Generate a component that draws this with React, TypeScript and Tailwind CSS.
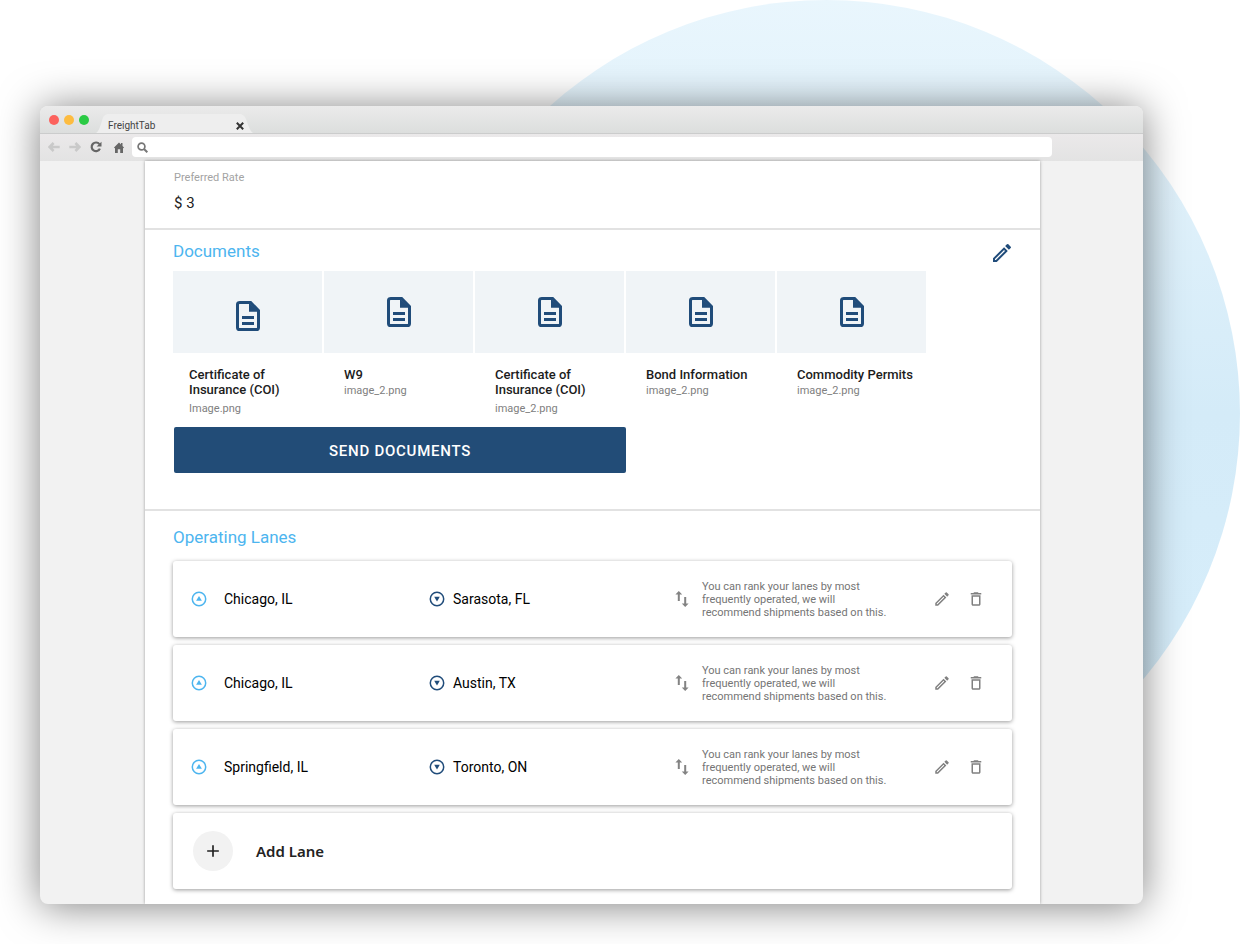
import React from "react";
import { MdDeleteOutline, MdOutlineModeEdit, MdAdd } from "react-icons/md";

const documents = [
  { title: "Certificate of Insurance (COI)", file: "Image.png", tile: "pt-2", label: "pl-4", gap: "mt-[3px]" },
  { title: "W9", file: "image_2.png", tile: "", label: "pl-5", gap: "" },
  { title: "Certificate of Insurance (COI)", file: "image_2.png", tile: "", label: "pl-5", gap: "mt-[3px]" },
  { title: "Bond Information", file: "image_2.png", tile: "", label: "pl-5", gap: "" },
  { title: "Commodity Permits", file: "image_2.png", tile: "", label: "pl-5", gap: "" },
];

const lanes = [
  { from: "Chicago, IL", to: "Sarasota, FL" },
  { from: "Chicago, IL", to: "Austin, TX" },
  { from: "Springfield, IL", to: "Toronto, ON" },
];

const cardShadow = "rounded-[3px] bg-white shadow-[0_1px_4px_rgba(0,0,0,0.4)]";

function DocumentIcon() {
  return (
    <svg viewBox="0 0 24 30" className="h-[30px] w-6" aria-hidden="true">
      <path
        d="M3.2 1.5H14.6L22.5 9.6V26.4Q22.5 28.5 20.4 28.5H3.6Q1.5 28.5 1.5 26.4V3.6Q1.5 1.5 3.6 1.5Z"
        fill="none"
        stroke="#204c7a"
        strokeWidth="3"
      />
      <path d="M13 1.5V10.8H22.5Z" fill="#204c7a" />
      <path d="M6 16.5H18M6 22.5H18" stroke="#204c7a" strokeWidth="3" />
    </svg>
  );
}

function PlaceIcon({ up }: { up: boolean }) {
  const color = up ? "#4db5ef" : "#204c7a";
  return (
    <svg viewBox="0 0 16 16" className="size-4 shrink-0" aria-hidden="true">
      <circle cx="8" cy="8" r="6.7" fill="none" stroke={color} strokeWidth="1.5" />
      <path d={up ? "M8 5L10.9 9.8H5.1Z" : "M8 10.5L5.2 5.8H10.8Z"} fill={color} />
    </svg>
  );
}

function SwapIcon() {
  return (
    <svg viewBox="0 0 14 18" className="h-[18px] w-3.5 shrink-0" fill="none" stroke="#838383" aria-hidden="true">
      <path d="M3.8 11V3M10.2 7V15" strokeWidth="2" />
      <path d="M3.8 1L7.2 4.6H0.4ZM10.2 17L6.800 13.4H13.6Z" fill="#838383" stroke="none" />
    </svg>
  );
}

function NavArrow({ flip }: { flip?: boolean }) {
  return (
    <svg viewBox="0 0 12 10" className={flip ? "h-2.5 w-3 rotate-180" : "h-2.5 w-3"} aria-hidden="true">
      <path d="M11.7 5H2M5.6 1L1.6 5L5.6 9" fill="none" stroke="#c9c9c9" strokeWidth="2.6" />
    </svg>
  );
}

function BrowserChrome() {
  return (
    <header>
      <div className="flex h-7 items-end border-b border-[#cbcccc] bg-linear-to-b from-[#ebebeb] to-[#dcdedd]">
        <div className="flex gap-[5px] self-center pl-[9px]">
          <span className="size-2.5 rounded-full bg-[#fc625d]" />
          <span className="size-2.5 rounded-full bg-[#fdbc40]" />
          <span className="size-2.5 rounded-full bg-[#2aca44]" />
        </div>
        <div className="relative ml-[7px] h-[19px] w-[157px]">
          <svg viewBox="0 0 160 19" preserveAspectRatio="none" className="absolute inset-0 size-full" aria-hidden="true">
            <path d="M0 19C3 17 4 13 6 7C7.5 2 9 0 13 0H146C150 0 152 2 153.5 7C156 13 157 17 160 19Z" fill="#eeeeee" />
          </svg>
          <div className="relative flex h-full items-center justify-between pt-1 pr-[9px] pl-3">
            <span className="text-[10px] leading-3 text-[#444]">FreightTab</span>
            <button type="button" aria-label="Close tab" className="size-2">
              <svg viewBox="0 0 8 8" className="size-2" aria-hidden="true">
                <path d="M0.8 0.8L7.2 7.2M7.2 0.8L0.8 7.2" stroke="#333" strokeWidth="2" />
              </svg>
            </button>
          </div>
        </div>
      </div>
      <div className="flex h-[27px] items-center bg-linear-to-b from-[#ebe9ea] to-[#e3e3e3] pr-[91px] pb-px pl-2">
        <button type="button" aria-label="Back"><NavArrow /></button>
        <button type="button" aria-label="Forward" className="ml-[9px]"><NavArrow flip /></button>
        <button type="button" aria-label="Reload" className="ml-[9px]">
          <svg viewBox="0 0 12 12" className="size-3" aria-hidden="true">
            <path d="M9.4 3.2A4.3 4.3 0 1 0 9.9 7.6" fill="none" stroke="#666" strokeWidth="2.2" />
            <path d="M11.5 0.8V5.5H6.6Z" fill="#666" />
          </svg>
        </button>
        <button type="button" aria-label="Home" className="ml-3">
          <svg viewBox="0 0 10 11" className="h-[11px] w-2.5" aria-hidden="true">
            <path d="M5 0.5L7 2.5V1H8.5V4L10 5.5L9.3 6.2L9 6V11H6.2V7.3H3.8V11H1V6L0.7 6.2L0 5.5Z" fill="#666" />
          </svg>
        </button>
        <label className="ml-2 flex h-5 grow items-center gap-1 rounded-[4px] bg-white pl-[5px]">
          <svg viewBox="0 0 11 11" className="size-[11px] shrink-0" aria-hidden="true">
            <circle cx="4.5" cy="4.5" r="3.4" fill="none" stroke="#777" strokeWidth="1.7" />
            <path d="M7 7L10.3 10.3" stroke="#777" strokeWidth="2" />
          </svg>
          <input type="text" aria-label="Address" className="h-4 w-full text-[11px] outline-none" />
        </label>
      </div>
    </header>
  );
}

function LaneCard({ from, to }: { from: string; to: string }) {
  return (
    <li className={`flex h-[76px] items-center pr-[27px] pl-[18px] text-sm leading-4 text-black ${cardShadow}`}>
      <div className="flex w-[238px] items-center gap-[17px]">
        <PlaceIcon up />
        <span>{from}</span>
      </div>
      <div className="flex grow items-center gap-2">
        <PlaceIcon up={false} />
        <span>{to}</span>
      </div>
      <div className="flex w-[258px] items-center gap-[13px]">
        <SwapIcon />
        <p className="w-[190px] text-[11px] leading-[13px] text-[#757575]">
          You can rank your lanes by most frequently operated, we will recommend shipments based on this.
        </p>
      </div>
      <div className="flex items-center gap-4">
        <button type="button" aria-label="Edit lane"><MdOutlineModeEdit className="size-[18px] text-[#808080]" /></button>
        <button type="button" aria-label="Delete lane"><MdDeleteOutline className="size-[18px] text-[#808080]" /></button>
      </div>
    </li>
  );
}

export default function App() {
  return (
    <div className="relative isolate overflow-hidden bg-white pt-[106px] pr-[99px] pb-10 pl-10 font-['Roboto',sans-serif]">
      <div className="absolute top-0 right-0.5 -z-10 size-[827px] rounded-full bg-linear-to-b from-[#e9f6fd] via-[#d4ebf8] to-[#d8effc]" />
      <div className="overflow-hidden rounded-lg bg-[#f2f2f2] shadow-[0_2px_40px_rgba(0,0,0,0.5)]">
        <BrowserChrome />
        <main className="mr-[103px] ml-[105px] bg-white px-7 pb-[15px] shadow-[0_0_3px_rgba(0,0,0,0.35)]">
          <section className="-mx-7 h-[69px] border-b-2 border-[#e2e2e2] px-[29px] pt-2.5">
            <h3 className="text-[11px] leading-[13px] text-[#a3a3a3]">Preferred Rate</h3>
            <p className="mt-2.5 text-[15px] leading-[18px] text-[#222]">$ 3</p>
          </section>

          <section className="-mx-7 border-b-2 border-[#e2e2e2] px-7 pt-[11px] pb-9">
            <div className="flex items-start justify-between">
              <h2 className="text-[17px] leading-5 text-[#4db5ef]">Documents</h2>
              <button type="button" aria-label="Edit documents" className="-mr-0.5"><MdOutlineModeEdit className="size-6 text-[#204c7a]" /></button>
            </div>
            <ul className="mt-1.5 grid w-[753px] max-w-full grid-cols-5 gap-0.5">
              {documents.map((doc, i) => (
                <li key={i}>
                  <div className={`flex h-[82px] items-center justify-center bg-[#f0f4f7] ${doc.tile}`}>
                    <DocumentIcon />
                  </div>
                  <div className={`pt-3.5 ${doc.label}`}>
                    <h3 className="w-[120px] text-[13px] leading-[15px] font-medium text-[#1c1c1c]">{doc.title}</h3>
                    <p className={`pt-0.5 text-[11px] leading-[13px] text-[#808080] ${doc.gap}`}>{doc.file}</p>
                  </div>
                </li>
              ))}
            </ul>
            <button type="button" className="mt-3 ml-px h-[46px] w-[452px] max-w-full rounded-[2px] bg-[#224c77] pt-0.5 text-[15px] font-medium tracking-wider text-white">
              SEND DOCUMENTS
            </button>
          </section>

          <section className="pt-4">
            <h2 className="text-[17px] leading-5 text-[#4db5ef]">Operating Lanes</h2>
            <ul className="mt-3.5 flex flex-col gap-2">
              {lanes.map((lane, i) => (
                <LaneCard key={i} from={lane.from} to={lane.to} />
              ))}
              <li className={cardShadow}>
                <button type="button" className="flex h-[76px] w-full items-center gap-[23px] pl-5 text-left">
                  <span className="flex size-10 items-center justify-center rounded-full bg-[#f2f2f2]">
                    <MdAdd className="size-5 text-[#222]" />
                  </span>
                  <span className="font-['Noto_Sans',sans-serif] text-[15px] font-semibold text-[#222]">Add Lane</span>
                </button>
              </li>
            </ul>
          </section>
        </main>
      </div>
    </div>
  );
}
